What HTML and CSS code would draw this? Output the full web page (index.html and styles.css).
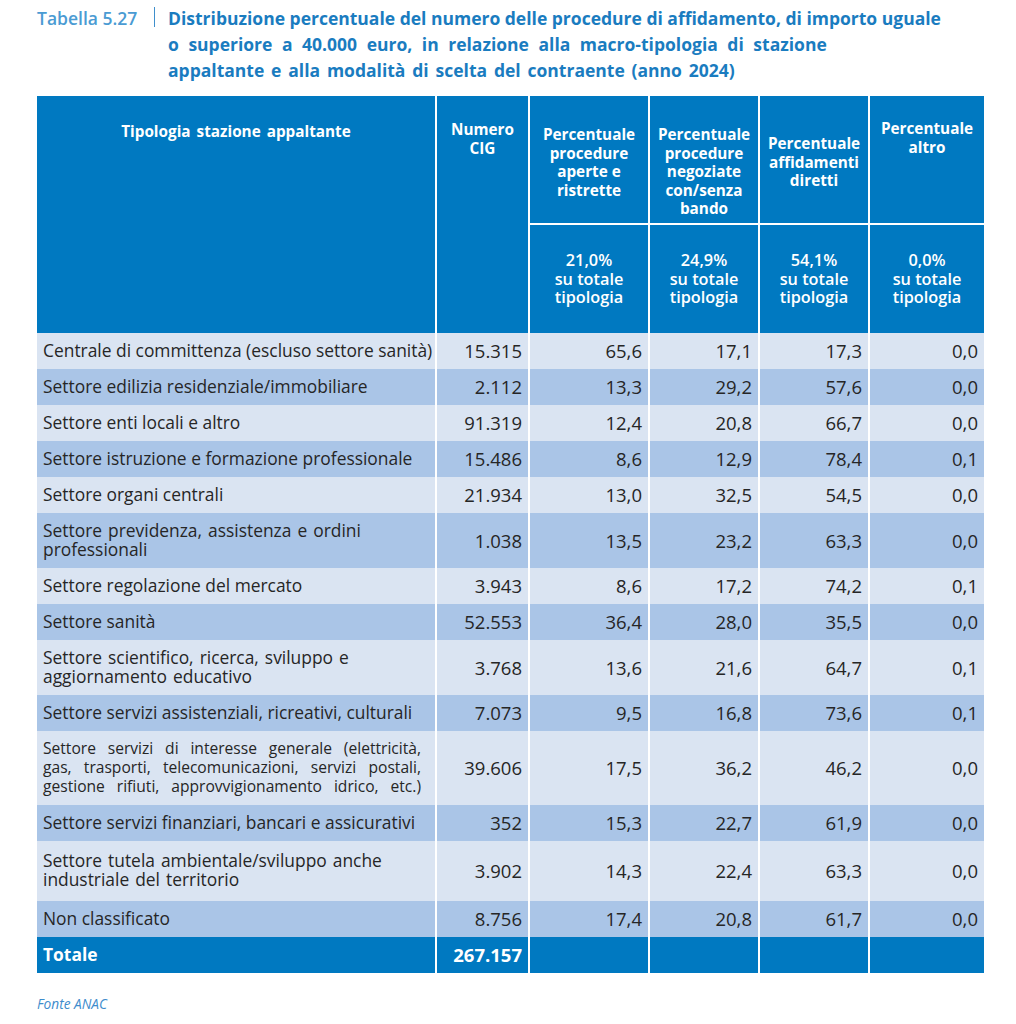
FILE: index.html
```html
<!DOCTYPE html>
<html lang="it">
<head>
<meta charset="utf-8">
<title>Tabella 5.27</title>
<link rel="stylesheet" href="styles.css">
</head>
<body>
<div class="page">
  <div class="caption">
    <div class="caption-label">Tabella 5.27</div>
    <div class="caption-bar"></div>
    <div class="caption-text">Distribuzione percentuale del numero delle procedure di affidamento, di importo uguale<br><span class="spaced-wide">o superiore a 40.000 euro, in relazione alla macro-tipologia di stazione</span><br><span class="spaced">appaltante e alla modalità di scelta del contraente (anno 2024)</span></div>
  </div>

  <table class="data">
    <colgroup>
      <col class="c1"><col class="c2"><col class="c3"><col class="c4"><col class="c5"><col class="c6">
    </colgroup>
    <thead>
      <tr class="h1">
        <th rowspan="2" class="th-tip">Tipologia stazione appaltante</th>
        <th rowspan="2" class="th-num">Numero<br>CIG</th>
        <th class="th-a">Percentuale<br>procedure<br>aperte e<br>ristrette</th>
        <th class="th-b">Percentuale<br>procedure<br>negoziate<br>con/senza<br>bando</th>
        <th class="th-c">Percentuale<br>affidamenti<br>diretti</th>
        <th class="th-d">Percentuale<br>altro</th>
      </tr>
      <tr class="h2">
        <th class="th-sub">21,0%<br>su totale<br>tipologia</th>
        <th class="th-sub">24,9%<br>su totale<br>tipologia</th>
        <th class="th-sub">54,1%<br>su totale<br>tipologia</th>
        <th class="th-sub">0,0%<br>su totale<br>tipologia</th>
      </tr>
    </thead>
    <tbody>
      <tr class="light"><td class="name">Centrale di committenza (escluso settore sanità)</td><td>15.315</td><td>65,6</td><td>17,1</td><td>17,3</td><td>0,0</td></tr>
      <tr class="dark"><td class="name">Settore edilizia residenziale/immobiliare</td><td>2.112</td><td>13,3</td><td>29,2</td><td>57,6</td><td>0,0</td></tr>
      <tr class="light"><td class="name">Settore enti locali e altro</td><td>91.319</td><td>12,4</td><td>20,8</td><td>66,7</td><td>0,0</td></tr>
      <tr class="dark"><td class="name">Settore istruzione e formazione professionale</td><td>15.486</td><td>8,6</td><td>12,9</td><td>78,4</td><td>0,1</td></tr>
      <tr class="light"><td class="name">Settore organi centrali</td><td>21.934</td><td>13,0</td><td>32,5</td><td>54,5</td><td>0,0</td></tr>
      <tr class="dark"><td class="name multi">Settore previdenza, assistenza e ordini<br>professionali</td><td>1.038</td><td>13,5</td><td>23,2</td><td>63,3</td><td>0,0</td></tr>
      <tr class="light"><td class="name">Settore regolazione del mercato</td><td>3.943</td><td>8,6</td><td>17,2</td><td>74,2</td><td>0,1</td></tr>
      <tr class="dark"><td class="name">Settore sanità</td><td>52.553</td><td>36,4</td><td>28,0</td><td>35,5</td><td>0,0</td></tr>
      <tr class="light"><td class="name multi">Settore scientifico, ricerca, sviluppo e<br>aggiornamento educativo</td><td>3.768</td><td>13,6</td><td>21,6</td><td>64,7</td><td>0,1</td></tr>
      <tr class="dark"><td class="name">Settore servizi assistenziali, ricreativi, culturali</td><td>7.073</td><td>9,5</td><td>16,8</td><td>73,6</td><td>0,1</td></tr>
      <tr class="light"><td class="name justified">Settore servizi di interesse generale (elettricità,<br>gas, trasporti, telecomunicazioni, servizi postali,<br>gestione rifiuti, approvvigionamento idrico, etc.)</td><td>39.606</td><td>17,5</td><td>36,2</td><td>46,2</td><td>0,0</td></tr>
      <tr class="dark"><td class="name">Settore servizi finanziari, bancari e assicurativi</td><td>352</td><td>15,3</td><td>22,7</td><td>61,9</td><td>0,0</td></tr>
      <tr class="light tall"><td class="name multi">Settore tutela ambientale/sviluppo anche<br>industriale del territorio</td><td>3.902</td><td>14,3</td><td>22,4</td><td>63,3</td><td>0,0</td></tr>
      <tr class="dark"><td class="name">Non classificato</td><td>8.756</td><td>17,4</td><td>20,8</td><td>61,7</td><td>0,0</td></tr>
      <tr class="total"><td class="name">Totale</td><td>267.157</td><td></td><td></td><td></td><td></td></tr>
    </tbody>
  </table>

  <div class="source">Fonte ANAC</div>
</div>
</body>
</html>
```

FILE: styles.css
```css
html, body {
  margin: 0;
  padding: 0;
  background: #ffffff;
}

.page {
  padding: 5px 0 0 37px;
  width: 947px;
  font-family: "Open Sans", "Noto Sans", sans-serif;
}

.caption {
  display: flex;
  align-items: flex-start;
  height: 91px;
}

.caption-label {
  font-size: 17.5px;
  font-weight: 600;
  color: #4a9bd3;
  line-height: 26px;
  width: 117px;
  white-space: nowrap;
}

.caption-bar {
  width: 0;
  height: 20px;
  border-left: 1.5px solid #3f8fcc;
  margin-top: 2px;
  margin-right: 13px;
}

.caption-text {
  font-size: 17.5px;
  font-weight: 700;
  color: #1a7cc0;
  line-height: 26px;
  white-space: nowrap;
}

.spaced {
  word-spacing: 2.3px;
}

.spaced-wide {
  word-spacing: 5px;
}

table.data {
  width: 947px;
  border-collapse: separate;
  border-spacing: 0;
  table-layout: fixed;
}

col.c1 { width: 398px; }
col.c2 { width: 93px; }
col.c3 { width: 120px; }
col.c4 { width: 110px; }
col.c5 { width: 110px; }
col.c6 { width: 116px; }

thead th {
  background: #0079c1;
  color: #ffffff;
  font-weight: 700;
  font-size: 15.3px;
  line-height: 18.5px;
  text-align: center;
  vertical-align: top;
  padding: 0 2px;
  border-left: 2px solid #ffffff;
}

thead th:first-child {
  border-left: none;
}

.h1 th {
  height: 127px;
  box-sizing: border-box;
}

.h1 .th-tip { padding-top: 26px; word-spacing: 2px; }
.h1 .th-num { padding-top: 24px; }
.h1 .th-a { padding-top: 29px; }
.h1 .th-b { padding-top: 29px; }
.h1 .th-c { padding-top: 38px; }
.h1 .th-d { padding-top: 23px; }

.h2 th {
  height: 110px;
  box-sizing: border-box;
  vertical-align: middle;
  border-top: 2px solid #ffffff;
  font-size: 16.3px;
  font-weight: 600;
}

.h2 th:first-child {
  border-left: 2px solid #ffffff;
}

tbody td {
  font-size: 18.5px;
  line-height: 19px;
  color: #262626;
  padding: 8px 6px 9px 6px;
  text-align: right;
  vertical-align: middle;
  border-left: 2px solid #ffffff;
  white-space: nowrap;
}

tbody td:first-child {
  border-left: none;
}

tbody td.name {
  font-size: 17.4px;
  text-align: left;
  padding-left: 6px;
  padding-right: 2px;
}

tbody td.multi {
  word-spacing: 1.5px;
}

tbody tr.tall td {
  padding-top: 10px;
  padding-bottom: 12px;
}

tbody td.justified {
  font-size: 15.6px;
  text-align: justify;
  text-align-last: justify;
  padding-right: 14px;
  white-space: normal;
}

tr.light td { background: #dae4f2; }
tr.dark td { background: #aac5e7; }

tr.total td {
  background: #0079c1;
  color: #ffffff;
  font-weight: 700;
}

.source {
  margin-top: 21px;
  font-size: 13.7px;
  font-style: italic;
  color: #3e8ccc;
}
```
